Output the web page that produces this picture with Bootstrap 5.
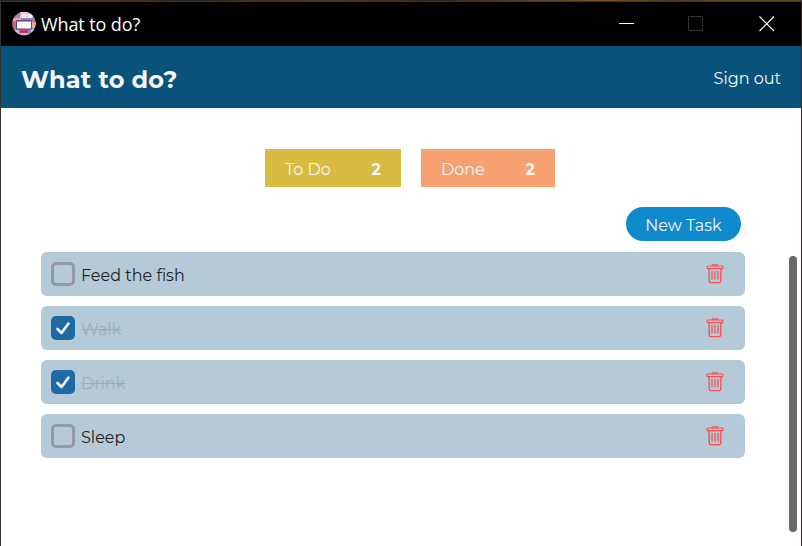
<!DOCTYPE html>
<html lang="en">
<head>
<meta charset="utf-8">
<meta name="viewport" content="width=device-width, initial-scale=1">
<title>What to do?</title>
<link href="https://cdn.jsdelivr.net/npm/bootstrap@5.3.0/dist/css/bootstrap.min.css" rel="stylesheet">
<style>
html, body { height: 100%; overflow: hidden; }
body { font-family: Montserrat, Inter, sans-serif; font-size: 16px; font-weight: 400; line-height: 24px; background: #2b2623; color: #222; }
.desk-edge { height: 2px; border-bottom: 1px solid #393532; background: linear-gradient(90deg, #2a211b, #4d3420 12%, #2b2119 24%, #51391f 40%, #30231a 55%, #62442a 67%, #795021 76%, #4f371f 84%, #6b4826 91%, #63421f); }
.window-frame { height: 546px; border-right: 1px solid #332c29; border-left: 1px solid #333; border-top: 0; }
.title-bar { height: 44px; background: #000; color: #fff; padding-left: 11px; padding-right: 26px; }
.title-text { font-family: "Segoe UI", "Open Sans", sans-serif; font-size: 18px; font-weight: 400; margin-left: 5px; letter-spacing: -.1px; }
.window-controls { gap: 53px; }
.control-close { margin-left: 2px; }
.app-header { height: 62px; background: #09527a; color: #f5f5f5; padding: 4px 20px 0; }
.app-title { font-size: 24px; font-weight: 700; letter-spacing: .2px; padding-top: 2px; }
.app-body { height: 438px; background: #fff; padding: 41px 56px 0 40px; }
.counters { gap: 20px; height: 38px; padding-left: 35px; padding-right: 1px; }
.counter { height: 38px; padding: 4px 20px 0; color: #f5f5f5; }
.counter-todo { width: 136px; background: #d8bb40; }
.counter-done { width: 134px; background: #f7a072; }
.new-task { width: 115px; height: 34px; background: #0f8acd; color: #f5f5f5; margin: 20px 4px 11px 0; padding: 4px 0 0; font-weight: 400; border: 0; }
.new-task:hover { background: #0c78b3; color: #fff; }
.task-list { gap: 10px; }
.task { height: 44px; background: #b4cad7; border-radius: 6px; padding: 0 21px 0 10px; }
.task-label { margin-left: 6px; padding-top: 4px; }
.task-finished { color: #97afbd; text-decoration: line-through; }
.task-check { width: 24px; height: 24px; border: 3px solid #949a9f; border-radius: 5px; }
.task-check-on { border: 0; background: #1f69a5; }
.scroll-thumb { top: 256px; right: 4px; width: 8px; height: 276px; border-radius: 4px; background: #696969; }
svg { display: block; flex: none; }
</style>
</head>
<body>
<div class="window-frame position-relative">
  <div class="desk-edge"></div>
  <div class="title-bar d-flex align-items-center justify-content-between">
    <div class="d-flex align-items-center">
      <svg width="24" height="24" viewBox="0 0 24 24">
        <defs><clipPath id="logoClip"><circle cx="12" cy="11.5" r="11.7"/></clipPath></defs>
        <g clip-path="url(#logoClip)">
          <rect width="24" height="24" fill="#8c83c9"/>
          <path d="M8 0h13v6H8z" fill="#efc6d2"/>
          <path d="M10 2h4v4h-4zM16 2h4v4h-4z" fill="#fbeef0"/>
          <path d="M0 6h9v3H0zM19 10h5v6h-5z" fill="#f5a583"/>
          <path d="M0 11h3v7H0z" fill="#cf5f7d"/>
          <path d="M19 17h5v4h-5zM2 18h5v4H2z" fill="#c3bfe8"/>
          <rect x="4" y="8" width="16" height="9.500" rx="1" fill="#5347a0"/>
          <rect x="5" y="9.500" width="14" height="7" fill="#fff8f5"/>
          <path d="M8 18h8v3H8z" fill="#ca3d65"/>
          <path d="M9.500 19h1.500v1H9.500zM13 19h1.500v1h-1.500z" fill="#5b3c8e"/>
          <path d="M6 21.500h12V24H6z" fill="#eac4e8"/>
        </g>
      </svg>
      <span class="title-text">What to do?</span>
    </div>
    <div class="window-controls d-flex align-items-center">
      <svg width="16" height="16" viewBox="0 0 16 16"><path d="M0 7h15v1H0z" fill="#fff"/></svg>
      <svg width="16" height="16" viewBox="0 0 16 16"><path d="M.5.500h14v14H.500z" fill="none" stroke="#333"/></svg>
      <svg class="control-close" width="16" height="16" viewBox="0 0 16 16"><path d="M.5.500l14.500 14.500M15 .500L.500 15" fill="none" stroke="#fff" stroke-width="1.200"/></svg>
    </div>
  </div>
  <header class="app-header d-flex align-items-center justify-content-between">
    <h1 class="app-title mb-0">What to do?</h1>
    <span>Sign out</span>
  </header>
  <main class="app-body">
    <div class="counters d-flex justify-content-center">
      <div class="counter counter-todo d-flex align-items-center justify-content-between"><span>To Do</span><span class="fw-bold">2</span></div>
      <div class="counter counter-done d-flex align-items-center justify-content-between"><span>Done</span><span class="fw-bold">2</span></div>
    </div>
    <div class="d-flex justify-content-end">
      <button type="button" class="new-task btn rounded-pill">New Task</button>
    </div>
    <div class="task-list d-flex flex-column">
      <div class="task d-flex align-items-center">
        <span class="task-check"></span><span class="task-label">Feed the fish</span>
        <svg class="ms-auto" width="18" height="20" viewBox="0 0 18 20"><use href="#trash"/></svg>
      </div>
      <div class="task d-flex align-items-center">
        <span class="task-check task-check-on"><svg width="24" height="24" viewBox="0 0 24 24"><use href="#tick"/></svg></span><span class="task-label task-finished">Walk</span>
        <svg class="ms-auto" width="18" height="20" viewBox="0 0 18 20"><use href="#trash"/></svg>
      </div>
      <div class="task d-flex align-items-center">
        <span class="task-check task-check-on"><svg width="24" height="24" viewBox="0 0 24 24"><use href="#tick"/></svg></span><span class="task-label task-finished">Drink</span>
        <svg class="ms-auto" width="18" height="20" viewBox="0 0 18 20"><use href="#trash"/></svg>
      </div>
      <div class="task d-flex align-items-center">
        <span class="task-check"></span><span class="task-label">Sleep</span>
        <svg class="ms-auto" width="18" height="20" viewBox="0 0 18 20"><use href="#trash"/></svg>
      </div>
    </div>
  </main>
  <div class="scroll-thumb position-absolute"></div>
</div>
<svg width="0" height="0" class="position-absolute">
  <defs>
    <g id="trash" fill="none" stroke="#fa5054" stroke-linejoin="round" stroke-linecap="round">
      <path d="M6.500 1.500V.8h5v.7" stroke-width="1.300"/>
      <rect x="1.200" y="2" width="15.600" height="2.600" rx=".6" stroke-width="1.200"/>
      <path d="M3 4.800l.3 12.200q.1 1.600 1.700 1.600h8q1.600 0 1.700-1.600L15 4.800" stroke-width="1.400"/>
      <path d="M6 7.500v7.500M9 7.500v7.500M12 7.500v7.500" stroke-width="1.300"/>
    </g>
    <path id="tick" d="M6.500 13l4 4L17.500 7.500" fill="none" stroke="#f5f5f5" stroke-width="2.600" stroke-linecap="round" stroke-linejoin="round"/>
  </defs>
</svg>
<script src="https://cdn.jsdelivr.net/npm/bootstrap@5.3.0/dist/js/bootstrap.bundle.min.js"></script>
</body>
</html>
